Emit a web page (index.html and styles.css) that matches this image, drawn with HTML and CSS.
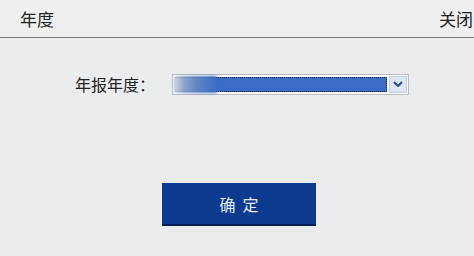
FILE: index.html
```html
<!DOCTYPE html>
<html lang="zh-CN">
<head>
<meta charset="utf-8">
<title>年度</title>
<link rel="stylesheet" href="styles.css">
</head>
<body>
<div class="header">
<span class="title">年度</span>
<span class="close">关闭</span>
</div>
<div class="content">
<div class="row">
<label for="year">年报年度：</label>
<div class="select" id="year">
<div class="blur"></div>
<div class="value"></div>
<div class="arrow">
<svg width="10" height="6" viewBox="0 0 10 6"><path d="M1 1 L5 5 L9 1" fill="none" stroke="#2e4a86" stroke-width="2"/></svg>
</div>
</div>
</div>
<div class="actions">
<button type="button" class="ok">确&nbsp;&nbsp;定</button>
</div>
</div>
</body>
</html>
```
FILE: styles.css
```css
html, body {
    margin: 0;
    padding: 0;
    overflow: hidden;
}

body {
    width: 474px;
    height: 256px;
    background: #ebeced;
    font-family: "Noto Sans CJK SC", "Liberation Sans", sans-serif;
    color: #222;
}

.header {
    height: 37px;
    border-bottom: 1px solid #7a7c7c;
    background: #eef0f0;
    display: flex;
    justify-content: space-between;
    align-items: center;
    padding-left: 20px;
    padding-right: 1px;
    font-size: 17px;
    white-space: nowrap;
}

.content {
    padding-top: 34px;
}

.row {
    display: flex;
    align-items: center;
    padding-left: 75px;
    font-size: 16px;
}

.row label {
    width: 97px;
}

.select {
    width: 235px;
    height: 19px;
    border: 1px solid #b8bcc4;
    background: #fff;
    display: flex;
    align-items: center;
    position: relative;
}

.value {
    flex: 1;
    height: 15px;
    margin: 0 2px;
    background: #3a6cc8;
    outline: 1px dotted #123;
    outline-offset: -1px;
}

.blur {
    position: absolute;
    left: 0;
    top: 1px;
    width: 44px;
    height: 17px;
    background: linear-gradient(90deg, #d9dde4, #8ba5cc 25%, #5f86c2 55%, #3a6cc8);
    filter: blur(1.5px);
    z-index: 1;
}

.arrow {
    width: 18px;
    height: 17px;
    margin-right: 1px;
    background: #dde6f4;
    border: 1px solid #c2cee2;
    box-sizing: border-box;
    display: flex;
    align-items: center;
    justify-content: center;
}

.actions {
    padding-top: 87px;
    padding-left: 162px;
}

.ok {
    width: 154px;
    height: 43px;
    border: 0;
    border-bottom: 2px solid #0a1f50;
    background: #0b3a8e;
    color: #e8ecf4;
    font-family: "Noto Sans CJK SC", sans-serif;
    font-size: 16px;
    padding: 0;
}
```
